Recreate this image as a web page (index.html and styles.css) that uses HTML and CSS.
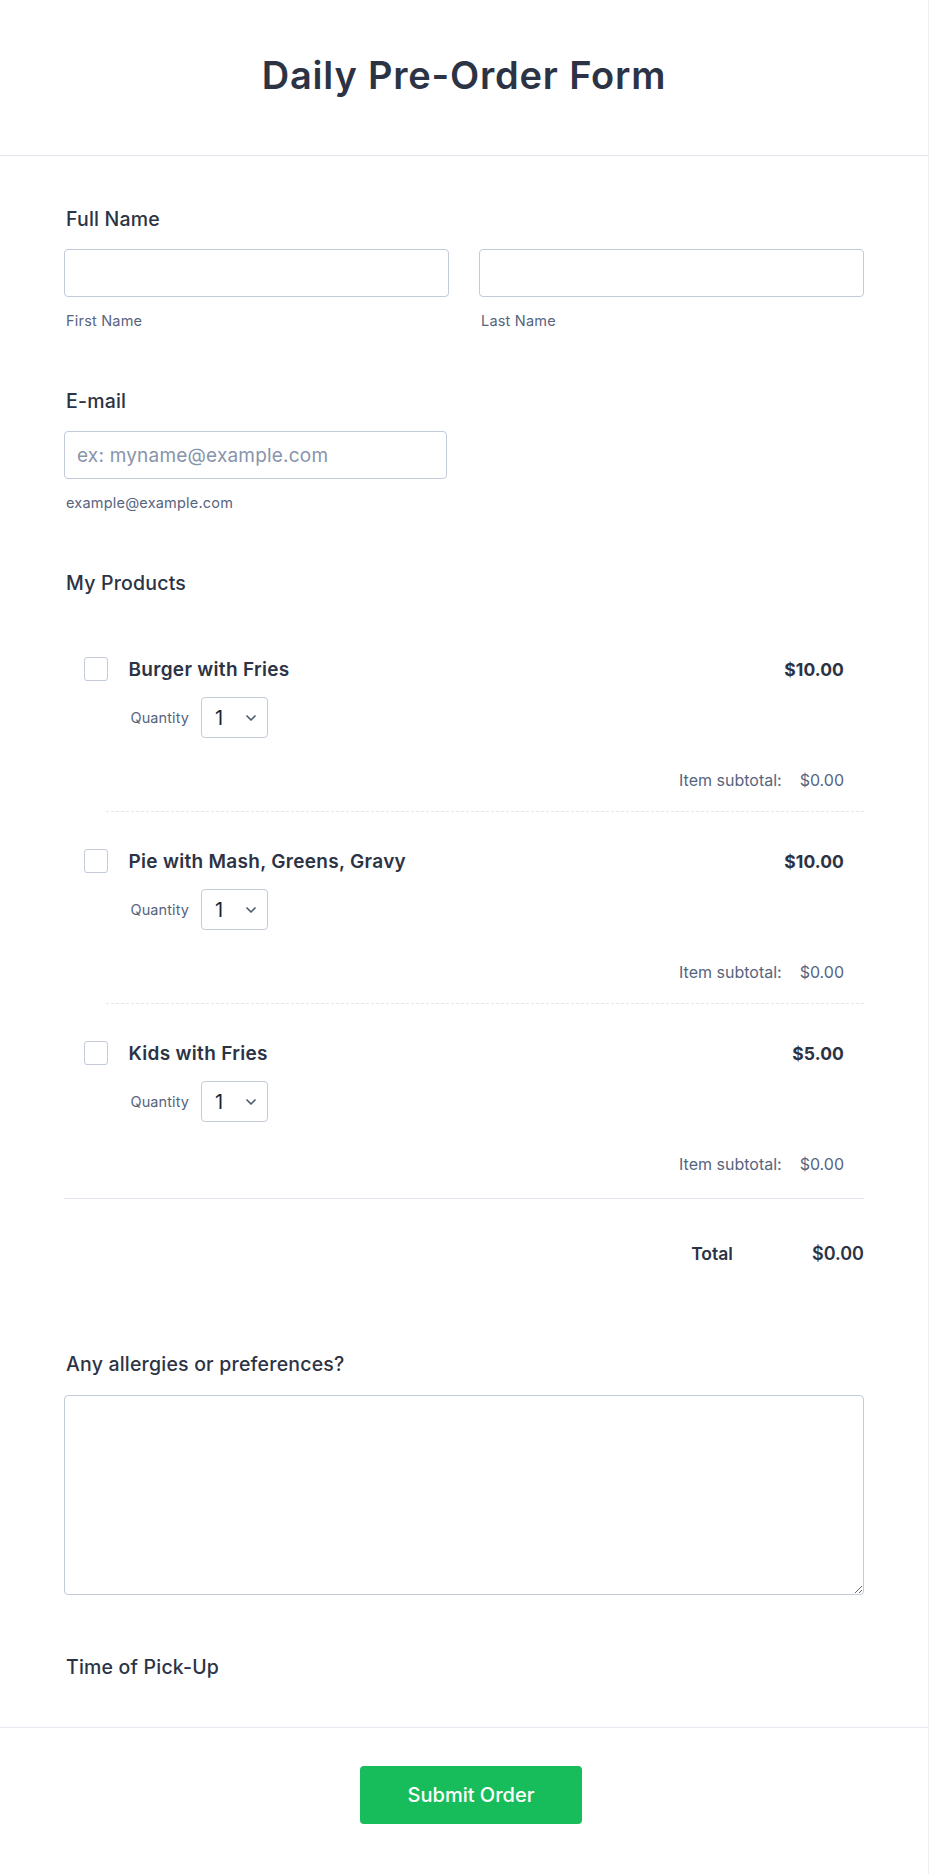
FILE: index.html
```html
<!DOCTYPE html>
<html lang="en">
<head>
<meta charset="utf-8">
<title>Daily Pre-Order Form</title>
<link rel="stylesheet" href="styles.css">
</head>
<body>
<div class="page">
  <header class="form-header">
    <h1 class="form-title">Daily Pre-Order Form</h1>
  </header>

  <main class="form-body">
    <section class="field">
      <div class="label">Full Name</div>
      <div class="name-row">
        <div class="name-col">
          <input class="text-input" type="text">
          <div class="sublabel">First Name</div>
        </div>
        <div class="name-col">
          <input class="text-input" type="text">
          <div class="sublabel">Last Name</div>
        </div>
      </div>
    </section>

    <section class="field">
      <div class="label">E-mail</div>
      <input class="text-input email-input" type="email" placeholder="ex: myname@example.com">
      <div class="sublabel">example@example.com</div>
    </section>

    <section class="field products-field">
      <div class="label">My Products</div>
      <div class="product-list">
        <div class="product">
          <div class="product-inner">
            <div class="product-top">
              <input class="check" type="checkbox">
              <span class="product-name">Burger with Fries</span>
              <span class="product-price">$10.00</span>
            </div>
            <div class="qty-row">
              <span class="qty-label">Quantity</span>
              <span class="select-wrap">
                <select class="qty-select"><option>1</option></select>
                <svg class="chevron" width="10" height="6" viewBox="0 0 10 6"><path d="M1 1l4 4 4-4" fill="none" stroke="#4f5b72" stroke-width="1.7" stroke-linecap="round" stroke-linejoin="round"/></svg>
              </span>
            </div>
            <div class="subtotal"><span>Item subtotal:</span><span class="subtotal-value">$0.00</span></div>
          </div>
        </div>
        <div class="product">
          <div class="product-inner">
            <div class="product-top">
              <input class="check" type="checkbox">
              <span class="product-name">Pie with Mash, Greens, Gravy</span>
              <span class="product-price">$10.00</span>
            </div>
            <div class="qty-row">
              <span class="qty-label">Quantity</span>
              <span class="select-wrap">
                <select class="qty-select"><option>1</option></select>
                <svg class="chevron" width="10" height="6" viewBox="0 0 10 6"><path d="M1 1l4 4 4-4" fill="none" stroke="#4f5b72" stroke-width="1.7" stroke-linecap="round" stroke-linejoin="round"/></svg>
              </span>
            </div>
            <div class="subtotal"><span>Item subtotal:</span><span class="subtotal-value">$0.00</span></div>
          </div>
        </div>
        <div class="product">
          <div class="product-inner">
            <div class="product-top">
              <input class="check" type="checkbox">
              <span class="product-name">Kids with Fries</span>
              <span class="product-price">$5.00</span>
            </div>
            <div class="qty-row">
              <span class="qty-label">Quantity</span>
              <span class="select-wrap">
                <select class="qty-select"><option>1</option></select>
                <svg class="chevron" width="10" height="6" viewBox="0 0 10 6"><path d="M1 1l4 4 4-4" fill="none" stroke="#4f5b72" stroke-width="1.7" stroke-linecap="round" stroke-linejoin="round"/></svg>
              </span>
            </div>
            <div class="subtotal"><span>Item subtotal:</span><span class="subtotal-value">$0.00</span></div>
          </div>
        </div>
      </div>
      <div class="total-row">
        <span class="total-label">Total</span>
        <span class="total-value">$0.00</span>
      </div>
    </section>

    <section class="field allergies-field">
      <div class="label">Any allergies or preferences?</div>
      <textarea class="textarea"></textarea>
    </section>

    <section class="field pickup-field">
      <div class="label">Time of Pick-Up</div>
    </section>
  </main>

  <footer class="form-footer">
    <button class="submit-btn" type="button">Submit Order</button>
  </footer>
</div>
</body>
</html>
```

FILE: styles.css
```css
* { box-sizing: border-box; }

html, body {
  margin: 0;
  padding: 0;
  background: #ffffff;
}

body {
  font-family: Inter, "Noto Sans", "Liberation Sans", sans-serif;
  color: #2c3345;
}

.page {
  width: 929px;
  min-height: 1874px;
  border-right: 1px solid #eceef3;
}

.form-header {
  padding: 54px 0 58px;
  border-bottom: 1px solid #e3e6ed;
  text-align: center;
}

.form-title {
  margin: 0;
  font-size: 38px;
  line-height: 43px;
  font-weight: 600;
  letter-spacing: 0.8px;
  color: #2c3345;
}

.form-body {
  width: 800px;
  margin: 0 auto;
  padding-top: 52px;
}

.field {
  margin-bottom: 61px;
}

.label {
  padding-left: 2px;
  font-size: 19.5px;
  line-height: 22px;
  font-weight: 500;
  letter-spacing: 0.2px;
  color: #2c3345;
  margin-bottom: 19px;
}

.name-row {
  display: flex;
  gap: 30px;
}

.name-col {
  flex: 1;
}

.text-input {
  display: block;
  width: 100%;
  height: 48px;
  border: 1px solid #c3cad8;
  border-radius: 4px;
  padding: 0 12px;
  font-family: inherit;
  font-size: 19px;
  letter-spacing: 0.2px;
  color: #2c3345;
  background: #fff;
  outline: none;
}

.text-input::placeholder {
  color: #8894ab;
}

.email-input {
  width: 383px;
}

.sublabel {
  margin-top: 15px;
  padding-left: 2px;
  font-size: 14.5px;
  line-height: 17px;
  letter-spacing: 0.2px;
  color: #57647e;
}

/* products */
.products-field {
  margin-bottom: 88px;
}

.product-list {
  margin-top: 26px;
}

.product-inner {
  padding: 37px 20px 21.5px 19.5px;
}

.product:not(:last-child)::after {
  content: "";
  display: block;
  margin-left: 42px;
  border-top: 1px dashed #e3e6ed;
}

.product-top {
  display: flex;
  align-items: center;
  height: 24px;
}

.check {
  appearance: none;
  -webkit-appearance: none;
  margin: 0;
  width: 24px;
  height: 24px;
  border: 1px solid #c3cad8;
  border-radius: 3px;
  background: #fff;
  flex: none;
}

.product-name {
  margin-left: 21px;
  font-size: 19px;
  font-weight: 600;
  letter-spacing: 0.3px;
  color: #2c3345;
}

.product-price {
  margin-left: auto;
  font-size: 17.5px;
  font-weight: 700;
  letter-spacing: 0.1px;
  color: #2c3345;
}

.qty-row {
  display: flex;
  align-items: center;
  margin-top: 16px;
  margin-left: 47px;
  gap: 12px;
}

.qty-label {
  font-size: 14.5px;
  letter-spacing: 0.1px;
  color: #57647e;
}

.select-wrap {
  position: relative;
  display: inline-block;
  width: 67px;
  height: 41px;
}

.qty-select {
  appearance: none;
  -webkit-appearance: none;
  width: 67px;
  height: 41px;
  margin: 0;
  border: 1px solid #c3cad8;
  border-radius: 4px;
  background: #fff;
  padding: 0 0 0 13px;
  font-family: inherit;
  font-size: 20px;
  color: #1f2433;
  outline: none;
}

.chevron {
  position: absolute;
  right: 12px;
  top: 18px;
  pointer-events: none;
}

.subtotal {
  display: flex;
  justify-content: flex-end;
  gap: 18px;
  margin-top: 31.5px;
  font-size: 16px;
  line-height: 20px;
  color: #57647e;
}

.total-row {
  display: flex;
  justify-content: flex-end;
  gap: 79px;
  margin-top: 3px;
  padding-top: 43.5px;
  border-top: 1px solid #e3e6ed;
  font-size: 18px;
  line-height: 22px;
  font-weight: 600;
  color: #2c3345;
}

.total-label {
  font-size: 17.5px;
}

/* allergies */
.allergies-field {
  margin-bottom: 61.5px;
}

.allergies-field .label {
  margin-bottom: 20px;
}

.textarea {
  display: block;
  width: 100%;
  height: 200px;
  border: 1px solid #c3cad8;
  border-radius: 4px;
  font-family: inherit;
  font-size: 16px;
  background: #fff;
  outline: none;
}

.pickup-field {
  margin-bottom: 48.5px;
}

.pickup-field .label {
  margin-bottom: 0;
}

/* footer */
.form-footer {
  display: flex;
  justify-content: center;
  padding: 38px 0 51px 14px;
  border-top: 1px solid #e8e9f0;
}

.submit-btn {
  width: 222px;
  height: 58px;
  border: none;
  border-radius: 4px;
  background: #18bd5b;
  color: #ffffff;
  font-family: inherit;
  font-size: 20px;
  font-weight: 500;
  cursor: pointer;
}
```
